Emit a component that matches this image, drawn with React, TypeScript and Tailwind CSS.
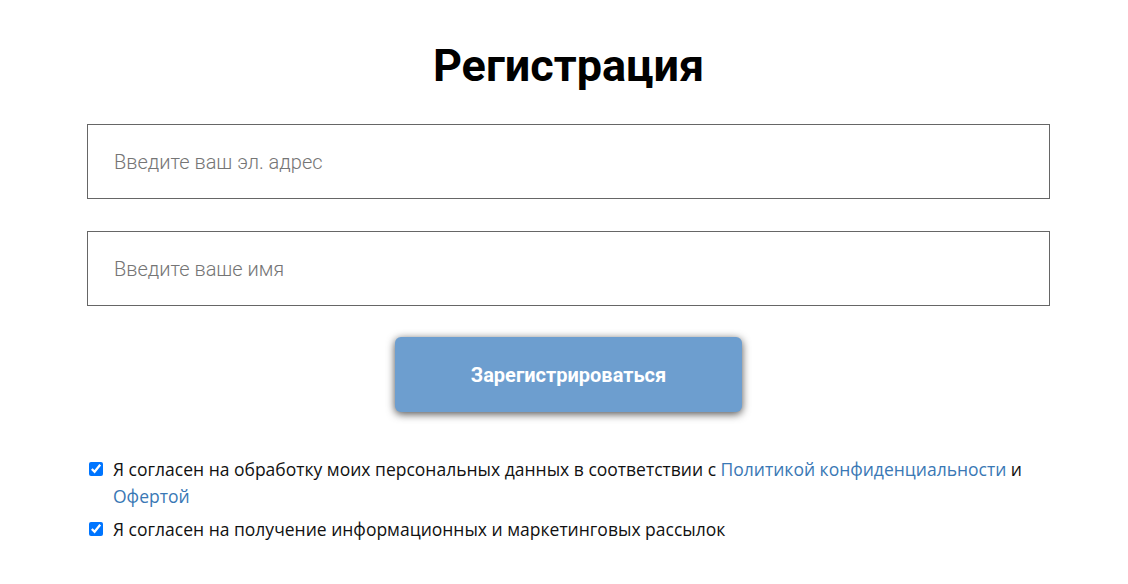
import React from "react";

export default function App() {
  return (
    <div className="w-[1128px] h-[584px] bg-white overflow-hidden">
      <div className="ml-[87px] w-[963px] flex flex-col">
        <h1 className="mt-[36px] text-center text-[45px] leading-[60px] font-bold text-black font-['Roboto',sans-serif]">
          Регистрация
        </h1>
        <input
          type="text"
          placeholder="Введите ваш эл. адрес"
          className="mt-[28px] h-[75px] w-full border border-[#666] px-[26px] text-[20px] font-light font-['Roboto',sans-serif] outline-none placeholder:text-[#757575]"
        />
        <input
          type="text"
          placeholder="Введите ваше имя"
          className="mt-[32px] h-[75px] w-full border border-[#666] px-[26px] text-[20px] font-light font-['Roboto',sans-serif] outline-none placeholder:text-[#757575]"
        />
        <div className="mt-[31px] flex justify-center">
          <button className="w-[347px] h-[75px] rounded-[6px] bg-[#6d9ecf] text-white text-[20px] font-bold font-['Roboto',sans-serif] shadow-[0_2px_9px_rgba(0,0,0,0.7)]">
            Зарегистрироваться
          </button>
        </div>
        <div className="mt-[44px] flex flex-col gap-[6px] font-['Open_Sans',sans-serif] text-[17.5px] leading-[27px] text-[#111]">
          <label className="flex items-start">
            <input type="checkbox" defaultChecked className="mt-[6px] ml-[2px] w-[14px] h-[14px] shrink-0 accent-[#0075ff]" />
            <span className="ml-[10px]">
              Я согласен на обработку моих персональных данных в соответствии с{" "}
              <a className="text-[#3a78b5]">Политикой конфиденциальности</a> и{" "}
              <a className="text-[#3a78b5]">Офертой</a>
            </span>
          </label>
          <label className="flex items-start">
            <input type="checkbox" defaultChecked className="mt-[6px] ml-[2px] w-[14px] h-[14px] shrink-0 accent-[#0075ff]" />
            <span className="ml-[10px]">Я согласен на получение информационных и маркетинговых рассылок</span>
          </label>
        </div>
      </div>
    </div>
  );
}
